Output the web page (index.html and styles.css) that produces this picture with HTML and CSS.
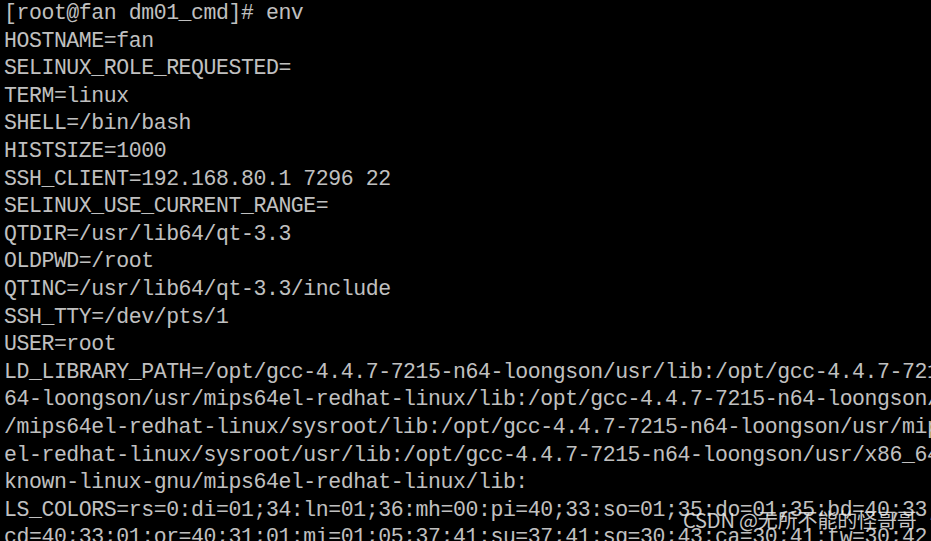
FILE: index.html
```html
<!DOCTYPE html>
<html lang="en">
<head>
<meta charset="utf-8">
<title>env</title>
<link rel="stylesheet" href="styles.css">
</head>
<body>
<main class="terminal">
<div class="line">[root@fan dm01_cmd]# env</div>
<div class="line">HOSTNAME=fan</div>
<div class="line">SELINUX_ROLE_REQUESTED=</div>
<div class="line">TERM=linux</div>
<div class="line">SHELL=/bin/bash</div>
<div class="line">HISTSIZE=1000</div>
<div class="line">SSH_CLIENT=192.168.80.1 7296 22</div>
<div class="line">SELINUX_USE_CURRENT_RANGE=</div>
<div class="line">QTDIR=/usr/lib64/qt-3.3</div>
<div class="line">OLDPWD=/root</div>
<div class="line">QTINC=/usr/lib64/qt-3.3/include</div>
<div class="line">SSH_TTY=/dev/pts/1</div>
<div class="line">USER=root</div>
<div class="line">LD_LIBRARY_PATH=/opt/gcc-4.4.7-7215-n64-loongson/usr/lib:/opt/gcc-4.4.7-7215-n</div>
<div class="line">64-loongson/usr/mips64el-redhat-linux/lib:/opt/gcc-4.4.7-7215-n64-loongson/usr</div>
<div class="line">/mips64el-redhat-linux/sysroot/lib:/opt/gcc-4.4.7-7215-n64-loongson/usr/mips64</div>
<div class="line">el-redhat-linux/sysroot/usr/lib:/opt/gcc-4.4.7-7215-n64-loongson/usr/x86_64-un</div>
<div class="line">known-linux-gnu/mips64el-redhat-linux/lib:</div>
<div class="line">LS_COLORS=rs=0:di=01;34:ln=01;36:mh=00:pi=40;33:so=01;35:do=01;35:bd=40;33;01:</div>
<div class="line">cd=40;33;01:or=40;31;01:mi=01;05;37;41:su=37;41:sg=30;43:ca=30;41:tw=30;42;01:</div>
</main>
<div class="watermark">CSDN @无所不能的怪哥哥</div>
</body>
</html>
```
FILE: styles.css
```css
html, body {
  margin: 0;
  padding: 0;
  background: #000;
  width: 931px;
  height: 541px;
  overflow: hidden;
}

.terminal {
  padding: 0 0 0 4px;
  font-family: "Liberation Mono", "DejaVu Sans Mono", monospace;
  font-size: 21.5px;
  letter-spacing: -0.43px;
  line-height: 27.6px;
  color: #c0c0c0;
}

.line {
  white-space: pre;
  overflow: hidden;
}

.watermark {
  position: absolute;
  left: 683px;
  top: 510px;
  font-family: "Noto Sans CJK SC", "Noto Sans", sans-serif;
  font-size: 20px;
  line-height: 20px;
  letter-spacing: -0.15px;
  color: rgba(235, 235, 235, 0.85);
  white-space: nowrap;
}
```
